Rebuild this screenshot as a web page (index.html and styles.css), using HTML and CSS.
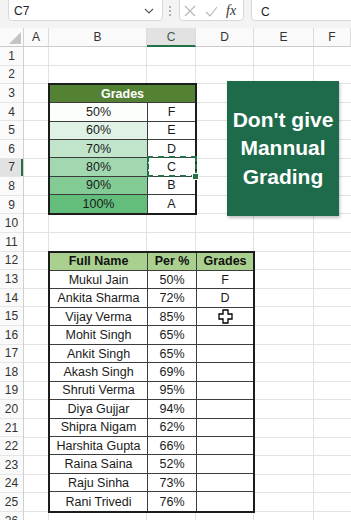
FILE: index.html
```html
<!DOCTYPE html>
<html>
<head>
<meta charset="utf-8">
<link rel="stylesheet" href="styles.css">
</head>
<body>
<div class="app">
  <header class="fbar">
    <div class="namebox">
      <span>C7</span>
      <svg class="chev" width="10" height="6" viewBox="0 0 10 6"><path d="M1 1l4 4 4-4" fill="none" stroke="#555" stroke-width="1.1"/></svg>
    </div>
    <svg class="grip" width="4" height="12" viewBox="0 0 4 12"><circle cx="2" cy="2" r="1" fill="#9a9a9a"/><circle cx="2" cy="6" r="1" fill="#9a9a9a"/><circle cx="2" cy="10" r="1" fill="#9a9a9a"/></svg>
    <div class="fxbox">
      <svg width="12" height="12" viewBox="0 0 12 12"><path d="M1 1l10 10M11 1L1 11" stroke="#b5b5b5" stroke-width="1.1" fill="none"/></svg>
      <svg width="13" height="11" viewBox="0 0 13 11"><path d="M1 6l4 4 7-9" stroke="#b5b5b5" stroke-width="1.1" fill="none"/></svg>
      <span class="fx">fx</span>
    </div>
    <div class="finput">C</div>
  </header>

  <div class="sheet">
    <div class="corner"><svg width="12" height="12" viewBox="0 0 12 12"><path d="M12 0V12H0z" fill="#c4c4c4"/></svg></div>
    <div class="ch">A</div>
    <div class="ch">B</div>
    <div class="ch sel">C</div>
    <div class="ch">D</div>
    <div class="ch">E</div>
    <div class="ch">F</div>

    <div class="rowheads">
      <div class="rh">1</div><div class="rh">2</div><div class="rh">3</div><div class="rh">4</div>
      <div class="rh">5</div><div class="rh">6</div><div class="rh sel">7</div><div class="rh">8</div>
      <div class="rh">9</div><div class="rh">10</div><div class="rh">11</div><div class="rh">12</div>
      <div class="rh">13</div><div class="rh">14</div><div class="rh">15</div><div class="rh">16</div>
      <div class="rh">17</div><div class="rh">18</div><div class="rh">19</div><div class="rh">20</div>
      <div class="rh">21</div><div class="rh">22</div><div class="rh">23</div><div class="rh">24</div>
      <div class="rh">25</div><div class="rh">26</div>
    </div>

    <div class="cells"></div>

    <div class="table t1">
      <div class="c hd">Grades</div>
      <div class="c b g50">50%</div><div class="c">F</div>
      <div class="c b g60">60%</div><div class="c">E</div>
      <div class="c b g70">70%</div><div class="c">D</div>
      <div class="c b g80">80%</div><div class="c ants">C</div>
      <div class="c b g90">90%</div><div class="c">B</div>
      <div class="c b g100 last">100%</div><div class="c last">A</div>
    </div>

    <div class="table t2">
      <div class="c b hd2">Full Name</div><div class="c b hd2">Per %</div><div class="c hd2">Grades</div>
      <div class="c b">Mukul Jain</div><div class="c b">50%</div><div class="c">F</div>
      <div class="c b">Ankita Sharma</div><div class="c b">72%</div><div class="c">D</div>
      <div class="c b">Vijay Verma</div><div class="c b">85%</div><div class="c"><svg class="cursor" width="15" height="15" viewBox="0 0 15 15"><path d="M5 1h5v4h4v5h-4v4H5v-4H1V5h4z" fill="#fff" stroke="#000" stroke-width="1.3"/></svg></div>
      <div class="c b">Mohit Singh</div><div class="c b">65%</div><div class="c"></div>
      <div class="c b">Ankit Singh</div><div class="c b">65%</div><div class="c"></div>
      <div class="c b">Akash Singh</div><div class="c b">69%</div><div class="c"></div>
      <div class="c b">Shruti Verma</div><div class="c b">95%</div><div class="c"></div>
      <div class="c b">Diya Gujjar</div><div class="c b">94%</div><div class="c"></div>
      <div class="c b">Shipra Nigam</div><div class="c b">62%</div><div class="c"></div>
      <div class="c b">Harshita Gupta</div><div class="c b">66%</div><div class="c"></div>
      <div class="c b">Raina Saina</div><div class="c b">52%</div><div class="c"></div>
      <div class="c b">Raju Sinha</div><div class="c b">73%</div><div class="c"></div>
      <div class="c b last">Rani Trivedi</div><div class="c b last">76%</div><div class="c last"></div>
    </div>
  </div>

  <div class="callout">
    <span>Don't give</span>
    <span>Mannual</span>
    <span>Grading</span>
  </div>
</div>
</body>
</html>
```

FILE: styles.css
```css
* { box-sizing: border-box; margin: 0; padding: 0; }
html, body { margin: 0; background: #fff; }
body {
  width: 351px;
  height: 520px;
  overflow: hidden;
  font-family: "Liberation Sans", Arial, sans-serif;
}
.app { position: relative; width: 351px; height: 520px; overflow: hidden; }

/* formula bar */
.fbar {
  display: flex;
  align-items: flex-start;
  height: 28px;
  background: #f3f3f3;
}
.namebox {
  margin: -5px 0 0 8px;
  width: 155px;
  height: 26px;
  background: #fff;
  border: 1px solid #d8d8d8;
  border-radius: 4px;
  display: flex;
  align-items: center;
  justify-content: space-between;
  padding: 6px 8px 0 5px;
  font-size: 12px;
  color: #222;
}
.grip { margin: 5px 0 0 5px; flex: none; }
.fxbox {
  margin: -5px 0 0 7px;
  width: 65px;
  height: 26px;
  background: #fff;
  border: 1px solid #d8d8d8;
  border-radius: 4px;
  display: flex;
  align-items: center;
  gap: 9px;
  padding: 6px 0 0 4px;
}
.fx {
  font-family: "Liberation Serif", "Times New Roman", serif;
  font-style: italic;
  font-size: 14px;
  color: #333;
  margin-left: -1px;
}
.finput {
  margin: -5px -8px 0 7px;
  flex: 1;
  height: 26px;
  background: #fff;
  border: 1px solid #d8d8d8;
  border-radius: 4px;
  padding: 9px 0 0 9px;
  font-size: 12px;
  color: #222;
}

/* sheet grid */
.sheet {
  display: grid;
  grid-template-columns: 24px 25px 98px 49px 58px 60px 37px;
  grid-template-rows: 19px repeat(26, 18.6px);
}
.corner {
  grid-row: 1;
  grid-column: 1;
  background: #fafafa;
  border-right: 1px solid #d0d0d0;
  border-bottom: 1px solid #cacaca;
  display: flex;
  align-items: flex-end;
  justify-content: flex-end;
  padding: 0 2px 2px 0;
}
.ch {
  background: #fafafa;
  border-right: 1px solid #dcdcdc;
  border-bottom: 1px solid #cacaca;
  font-size: 12px;
  color: #333;
  display: flex;
  align-items: center;
  justify-content: center;
}
.ch.sel {
  background: #e2e2e2;
  border-bottom: 2px solid #217346;
  color: #3a5a48;
}
.rowheads {
  grid-column: 1;
  grid-row: 2 / -1;
  display: flex;
  flex-direction: column;
  background: #fafafa;
  border-right: 1px solid #d0d0d0;
}
.rh {
  flex: none;
  height: 18.6px;
  border-bottom: 1px solid #e6e6e6;
  font-size: 12px;
  color: #333;
  display: flex;
  align-items: center;
  justify-content: center;
}
.rh.sel {
  background: #e2e2e2;
  box-shadow: inset -2px 0 0 #217346;
}
.cells {
  grid-column: 2 / -1;
  grid-row: 2 / -1;
  background:
    linear-gradient(#e2e2e2, #e2e2e2) 24px 0 / 1px 100% no-repeat,
    linear-gradient(#e2e2e2, #e2e2e2) 122px 0 / 1px 100% no-repeat,
    linear-gradient(#e2e2e2, #e2e2e2) 171px 0 / 1px 100% no-repeat,
    linear-gradient(#e2e2e2, #e2e2e2) 229px 0 / 1px 100% no-repeat,
    linear-gradient(#e2e2e2, #e2e2e2) 289px 0 / 1px 100% no-repeat,
    repeating-linear-gradient(to bottom, transparent 0, transparent 17.6px, #e2e2e2 17.6px, #e2e2e2 18.6px);
}

/* tables */
.table {
  margin: -1px;
  border: 2px solid #1c1c1c;
  display: grid;
  font-size: 12.5px;
  color: #1a1a1a;
  background: #fff;
  z-index: 1;
}
.t1 {
  grid-column: 3 / 5;
  grid-row: 4 / 11;
  grid-template-columns: 98px 1fr;
  grid-template-rows: repeat(7, 1fr);
}
.t2 {
  grid-column: 3 / 6;
  grid-row: 13 / 27;
  grid-template-columns: 98px 49px 1fr;
  grid-template-rows: repeat(14, 1fr);
}
.c {
  display: flex;
  align-items: center;
  justify-content: center;
  border-bottom: 1px solid #3c3c3c;
  white-space: nowrap;
  position: relative;
}
.c.b { border-right: 1px solid #3c3c3c; }
.c.last { border-bottom: none; }
.hd {
  grid-column: 1 / -1;
  background: #548235;
  color: #fff;
  font-weight: bold;
}
.hd2 {
  background: #a9d08e;
  font-weight: bold;
  color: #111;
}
.g50 { background: #fcfefc; }
.g60 { background: #e0f2e5; }
.g70 { background: #c1e5ca; }
.g80 { background: #a1d8b0; }
.g90 { background: #82cb95; }
.g100 { background: #63be7b; }

.ants::after {
  content: "";
  position: absolute;
  top: -2px;
  left: -1px;
  right: -2px;
  bottom: -1px;
  border: 2px dashed #217346;
}
.ants::before {
  content: "";
  position: absolute;
  right: -4px;
  bottom: -4px;
  width: 5px;
  height: 5px;
  background: #217346;
  border: 1px solid #fff;
  z-index: 2;
}
.cursor { display: block; }

/* floating shape */
.callout {
  position: absolute;
  left: 227px;
  top: 81px;
  width: 112px;
  height: 135px;
  background: #1e6b4b;
  color: #fff;
  font-family: "Liberation Sans", Arial, sans-serif;
  font-weight: bold;
  font-size: 21px;
  line-height: 28.5px;
  display: flex;
  flex-direction: column;
  align-items: center;
  justify-content: center;
  box-shadow: 1px 2px 3px rgba(0, 0, 0, 0.25);
  z-index: 3;
}
```
